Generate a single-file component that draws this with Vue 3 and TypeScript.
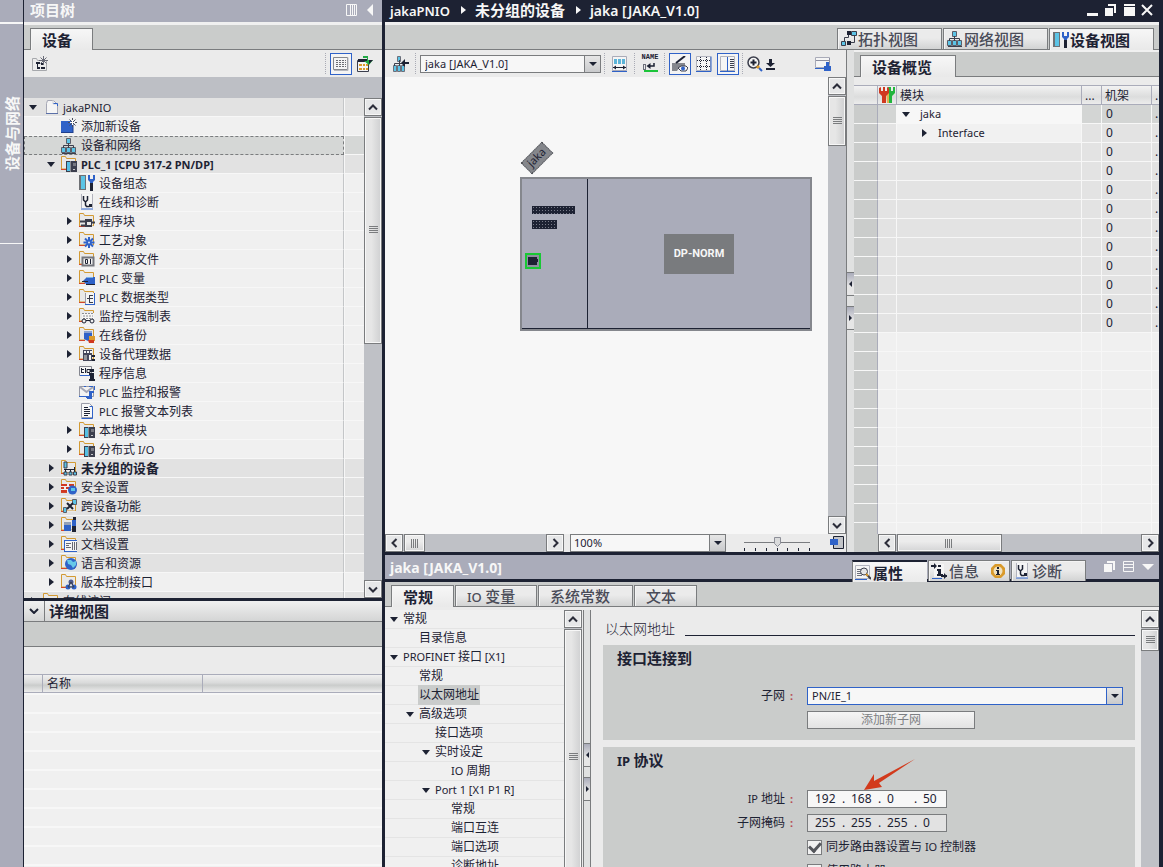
<script setup lang="ts">
import { h, ref } from 'vue'

type TreeRow = { level: number; arrow?: 'open' | 'closed'; icon: string; text: string; shade?: boolean; bold?: boolean; selected?: boolean }
type NavRow = { level: number; open?: boolean; text: string; selected?: boolean }

/* Splits a label into Latin and CJK runs so each gets its own text size. */
const Tx = (p: { t: string }) =>
  h('span', { class: 'tx' }, p.t.split(/([\x20-\x7e]+)/).filter(Boolean).map((s) =>
    /^[\x20-\x7e]/.test(s) ? h('span', { class: 'lt' }, s) : s))

const chevrons: Record<string, string> = {
  up: 'M4 10.5 8 6.5l4 4', down: 'M4 6.5l4 4 4-4', left: 'M10.5 4l-4 4 4 4', right: 'M6.5 4l4 4-4 4',
}
const chevron = (d: string) =>
  h('svg', { viewBox: '0 0 16 16', width: 16, height: 16, 'aria-hidden': 'true' },
    [h('path', { d: chevrons[d], fill: 'none', stroke: '#2b2d3a', 'stroke-width': 2 })])

/* endless: the bar runs on past the bottom of its panel, without an end button. */
const ScrollBar = (p: { dir: string; thumb: string; endless?: boolean }) => {
  const v = p.dir === 'v'
  return h('div', { class: ['sb', v ? 'sb-v' : 'sb-h'] }, [
    h('button', { class: 'sb-btn', type: 'button', 'aria-label': v ? '向上滚动' : '向左滚动' }, [chevron(v ? 'up' : 'left')]),
    h('div', { class: 'sb-track' }, [
      h('div', { class: 'sb-thumb', style: { flexBasis: p.thumb } }, [h('i', { class: 'grip' })]),
    ]),
    p.endless ? null : h('button', { class: 'sb-btn', type: 'button', 'aria-label': v ? '向下滚动' : '向右滚动' }, [chevron(v ? 'down' : 'right')]),
  ])
}
ScrollBar.props = { dir: String, thumb: String, endless: Boolean }

const folder = '<path d="M.5 13V.5h4l1 2h9V13z" fill="#e9e9e9" stroke="#d39a33"/><path d="M0 13.5h6" stroke="#d4452a"/><path d="M6 13.5h9" stroke="#e9e9e9"/>'
const plc = '<path d="M5 5h11v11H5z" fill="#3c3f4e"/><path d="M6 6h3v9H6z" fill="#55bfe3"/><path d="M9 5h1v11H9z" fill="#8a8c92"/><path d="M12 7h3v3h-3z" fill="#777982"/><path d="M12 13h2v1h-2z" fill="#c8c9cc"/>'
const wrench = '<path d="M9 0v5l2 2v8h3V7l2-2V0h-2v4h-3V0z" fill="#2f62c8"/><path d="M11 8h3v8h-3z" fill="#1d2233"/>'
const steth = '<path d="M2 0h12v15H2z" fill="#f5f5f5"/><path d="M2.5 0v14M13.5 0v14" stroke="#b2b3bd"/><path d="M2 15h12" stroke="#2f62c8"/><path d="M4.500 2v4l2 2 2-2V2M6.500 8v3l1 1.500h3" fill="none" stroke="#1d2233" stroke-width="1.500"/><path d="M10 10h3v3h-3z" fill="#1d2233"/>'
const sheet = '<path d="M2.500 .5h8l3 3v11h-11z" fill="#f7f7f7" stroke="#9a9ca8"/><path d="M10.500 3.500h3v12h-11" fill="none" stroke="#2f62c8"/>'
const net = '<path d="M5.500 .5h4v5h-4zM.5 9.500h4v5h-4zM5.500 9.500h4v5h-4zM10.500 9.500h4v5h-4z" fill="#5cc4e6" stroke="#5b5e69"/><path d="M7.500 5v5M2.500 10V7.500h10V10" fill="none" stroke="#3b3e4c"/><path d="M1 15.500h14" stroke="#3b3e4c"/>'
const icons: Record<string, string> = {
  project: '<path d="M4.500 1.500h6l4 4v9h-11v-10z" fill="#f5f5f5" stroke="#a5a7b5"/><path d="M10 1v4h4" fill="none" stroke="#d0d0d4"/><path d="M14.500 7V4.500h-4" fill="none" stroke="#2f62c8"/><path d="M3 14.500h12" stroke="#5b70a8"/>',
  add: '<path d="M0 3h12v12H0z" fill="#2f62c8"/><path d="M12 6v9M0 14.500h12" stroke="#1f3f8c"/><path d="M11.500 0v9M7 4.500h9M8.500 1.500l6 6M14.500 1.500l-6 6" stroke="#4a4c5a"/><path d="M11.500 2v5M9 4.500h5" stroke="#fff"/>',
  net,
  plc: folder + plc,
  config: '<path d="M0 0h7v15H0z" fill="#6f7175"/><path d="M2 1h4v13H2z" fill="#5cc4e6"/>' + wrench,
  steth,
  blocks: folder + '<path d="M1 8.500h6M12 9.500h4M2 12.500h5" stroke="#3b3e4c" stroke-width="2"/><path d="M6 6h7v8H6z" fill="#3b3e4c"/><path d="M8 9h4v3H8z" fill="#e8e8e8"/>',
  tech: folder + '<path d="M10 5v11M4.500 10.500h11M6 6.500l8 8M14 6.500l-8 8" stroke="#2f62c8" stroke-width="2"/><circle cx="10" cy="10.500" r="1" fill="#dfe6f5"/>',
  source: folder + '<path d="M3.500 6.500h11v8h-11z" fill="#f0f0f0" stroke="#74767d" stroke-width="2"/><path d="M6.500 8.500h2v4h-2zM11.500 8v5" fill="none" stroke="#1d2233"/>',
  tags: folder + '<path d="M4 11l4-4h8v7H7z" fill="#2f62c8"/><path d="M8 7.500h6" stroke="#78b4e8"/><path d="M3 11.500h6M7 14.500h9" stroke="#1d2233"/>',
  types: folder + '<path d="M6 4h9v11H6z" fill="#f5f5f5"/><path d="M6.500 4v11" stroke="#9a9ca8"/><path d="M15.500 4v11M6 15.500h10" stroke="#2f62c8"/><path d="M8 9.500h2M10.500 6v8M11 6.500h3M11 9.500h3M11 13.500h3" stroke="#3b3e4c"/>',
  watch: folder + '<path d="M3 5h12v8H3z" fill="#f5f5f5"/><path d="M3 5.500h12M4 8h10M4 10.500h10" stroke="#8c8e95" stroke-dasharray="2 1"/><circle cx="5" cy="13" r="2" fill="#eee" stroke="#1d2233"/><circle cx="13" cy="13" r="2" fill="#eee" stroke="#1d2233"/><path d="M7 12.500h4" stroke="#1d2233"/>',
  backup: folder + '<path d="M5 4h8v8l-4 2-4-2z" fill="#2f62c8"/><path d="M5 4h8v2H5z" fill="#8ea4cf"/><path d="M10 9h6v5h-6z" fill="#db9a2c"/><path d="M9 13h6v3h-5z" fill="#d03820"/>',
  proxy: folder + '<path d="M4 4h9v11H4z" fill="#45475a"/><path d="M5 5h2v2H5zM8 5h2v2H8zM11 5h2v2h-2zM10 9h2v5h-2z" fill="#f5f5f5"/><path d="M5 9h3v5H5z" fill="#94969c"/><path d="M13 9h3v2h-3zM13 13h3v2h-3z" fill="#1d2233"/>',
  info: '<path d="M.5 1.500h12v9H.5z" fill="#f5f5f5" stroke="#84868f"/><path d="M2.500 3v5M2 4.500h3M2 7.500h3M6.500 3v5M8 4.500h3v3H8z" fill="none" stroke="#1d2233"/><path d="M1 10.500h11" stroke="#2f62c8"/><path d="M11 4h4v3h-4zM10 8h5v6h1v2h-6v-2h1v-4h-1z" fill="#1d2233"/>',
  alarm: '<path d="M.5 2.500h14v10H.5z" fill="#f3f3f3" stroke="#9698a5"/><path d="M1 3l6.500 5L14 3" fill="none" stroke="#a5a7b5" stroke-width="2"/><path d="M0 12.500h9M15.500 2v4M5 2.500h2M10 2.500h4" stroke="#2f62c8"/><path d="M15 8h-4v5H7M12 8v6H8" fill="none" stroke="#2f62c8" stroke-width="2"/>',
  textlist: sheet + '<path d="M5 4.500h4M5 6.500h6M5 8.500h6M5 10.500h6M5 12.500h4" stroke="#1d2233"/>',
  unassigned: folder + '<path d="M3 2h3v6H3z" fill="#5cc4e6" stroke="#3b3e4c"/><path d="M3 9.500h11M4.500 10v3M9.500 10v3M13.500 7v6" stroke="#1d2233"/><path d="M3 12h3v3H3zM8 12h3v3H8zM12.500 12h3v3h-3z" fill="#5cc4e6" stroke="#3b3e4c"/>',
  security: folder + '<path d="M0 5h13v8H0z" fill="#f0f0f0"/><path d="M0 6h6M8 6h5M0 9h3M5 9h5M0 12h6" stroke="#d03820" stroke-width="2"/><circle cx="11.500" cy="11" r="4.500" fill="#2f62c8"/><path d="M10 9h4v3h-4z" fill="#5cc4e6"/>',
  cross: folder + '<path d="M11.500 1.500h4v5h-4zM2.500 9.500h3v5h-3z" fill="#5cc4e6" stroke="#5e6069"/><path d="M6 5l6 6M12 5l-6 6" stroke="#1d2233" stroke-width="2"/>',
  common: folder + '<path d="M3 5h7v9H3z" fill="#2f62c8"/><path d="M3 5h7v3H3z" fill="#93a0b8"/><path d="M11 3h4v6h-4z" fill="#2f62c8"/><path d="M12 0h3v3h-3zM11 9h4v6h-4z" fill="#1d2233"/>',
  docs: folder + '<path d="M3 4h13v11H3z" fill="#f5f5f5"/><path d="M3 4.500h13M3.500 4v11M3 15.500h13" stroke="#2f62c8"/><path d="M5 7.500h5M5 9.500h3M5 11.500h5M11.500 6v8M13.500 6v8M15.500 6v8" stroke="#666873"/>',
  lang: folder + '<circle cx="10" cy="9" r="6" fill="#2f62c8"/><path d="M6 5h4l2 2 3-1v4l-3 3-2-3-3-1z" fill="#67c8e8"/>',
  version: folder + '<circle cx="10" cy="8" r="2.500" fill="#4b5a8e"/><circle cx="7" cy="13" r="2.500" fill="#2f62c8"/><circle cx="13" cy="13" r="2.500" fill="#2f62c8"/><path d="M10 8l-3 5h6z" fill="none" stroke="#3b3e4c"/>',
  folder,
  newgroup: '<path d="M.5 14.500v-12h4l1 2h9v10z" fill="#ececec" stroke="#a6a8ac"/><path d="M4 7h4M5 12h3M9 12h4M9 8h3" stroke="#1d2233" stroke-width="2"/><path d="M5.500 7v5" stroke="#1d2233"/><path d="M11.500 0v9M7 4.500h9M8.500 1.500l6 6M14.500 1.500l-6 6" stroke="#6a6c78"/>',
  listview: '<path d="M.5 1.500h14v12H.5z" fill="#f5f5f5" stroke="#85878c"/><path d="M3 4.500h10M3 6.500h10M3 8.500h10M3 10.500h10" stroke="#6c6e74" stroke-dasharray="2 1"/><path d="M1 14.500h14v-13" fill="none" stroke="#b5b7be"/>',
  export: '<path d="M.5 4.500h11v11H.5z" fill="#f5f5f5" stroke="#3b3e4c"/><path d="M1 4.500h10" stroke="#1d2233" stroke-width="3"/><path d="M2 8h3v2H2zM6 8h2v2H6zM9 8h2v2H9zM2 12h3v2H2zM6 12h2v2H6zM9 12h2v2H9z" fill="#db9a2c"/><path d="M6 0h5v4h5l-4 5-5-4h3V2H6z" fill="#22a845"/><path d="M12 4h4l-4 4z" fill="#1d2233"/>',
  goto: '<path d="M4.500 .5h3v5h-3zM.5 9.500h3v6h-3zM4.500 9.500h3v6h-3zM8.500 9.500h3v6h-3z" fill="#5cc4e6" stroke="#6c6f7a"/><path d="M6.500 4v6M1.500 10V7.500h9V10" fill="none" stroke="#3b3e4c"/><path d="M8 7l4-4v3h4v2h-4v3z" fill="#1d2233"/>',
  width: '<path d="M.5 .5h14v14H.5z" fill="#f5f5f5" stroke="#a9abb8"/><path d="M2 3h3v5H2zM6 3h3v5H6zM10 3h3v5h-3z" fill="#5cb4d8"/><path d="M1 11.500h13" stroke="#1d2233"/><path d="M1 11.500l3-2v4zM14 11.500l-3-2v4z" fill="#1d2233"/><path d="M0 15.500h15" stroke="#2f62c8"/>',
  name: '<path d="M1.500 8v6M1 8.500h3M3.500 8v6M1 13.500h3" stroke="#6c6f7a"/><path d="M6 10h6V7" fill="none" stroke="#1d2233" stroke-width="1.500"/><path d="M4.500 10l4-3v6z" fill="#1d2233"/><path d="M2 15h14" stroke="#1cc43a" stroke-width="2"/>',
  paint: '<path d="M0 7h13v5H7l-2 3H0z" fill="#85878d"/><path d="M4 7l9-7" stroke="#1d2233" stroke-width="2"/><path d="M6 12l3-2h5l2 2-2 3H9z" fill="#f5f5f5" stroke="#3b3e4c"/><circle cx="11" cy="12.500" r="2" fill="#2f62c8"/>',
  grid: '<path d="M.5 .5h14v14H.5z" fill="#f5f5f5" stroke="#b2b4be"/><path d="M4.500 1v13M10.500 1v13M1 4.500h13M1 10.500h13" stroke="#1d2233" stroke-dasharray="1 1"/><path d="M0 15.500h15v-15" fill="none" stroke="#2f62c8"/>',
  split: '<path d="M.5 .5h14v14H.5z" fill="#f5f5f5" stroke="#b2b4be"/><path d="M7.500 1v14" stroke="#2f62c8"/><path d="M10 3.500h4M10 5.500h4M10 7.500h4M10 9.500h4M10 11.500h4" stroke="#3b3e4c"/><path d="M0 15.500h15" stroke="#2f62c8"/>',
  zoom: '<circle cx="6.500" cy="6.500" r="5.500" fill="#f5f5f5" stroke="#3b3e4c" stroke-width="1.500"/><path d="M3.500 6.500h6M6.500 3.500v6" stroke="#1d2233" stroke-width="2"/><path d="M10 10l2 2" stroke="#db9a2c" stroke-width="3"/><path d="M12 12l3 3" stroke="#2f62c8" stroke-width="2"/>',
  fit: '<path d="M6 3h3v4h3l-4.500 4L3 7h3zM3 12h9v2H3z" fill="#1d2233"/>',
  savewin: '<path d="M.5 1.500h14v10H.5z" fill="#f5f5f5" stroke="#a9abb8"/><path d="M1 4.500h13M14.500 2v6" stroke="#8d8fa0"/><path d="M0 12.500h9" stroke="#2f62c8"/><path d="M11 6h3v4h2v5H9v-5h2z" fill="#2f62c8"/>',
  topo: '<path d="M6 0h4v4H6zM6 10h4v4H6z" fill="#1d2233"/><path d="M10.500 .5h5v4h-5zM.5 10.500h4v4h-4z" fill="#5cc4e6" stroke="#3b3e4c"/><path d="M3.500 10V6.500h4V4M13.500 5v6.500H10" fill="none" stroke="#3b3e4c"/>',
  wrenches: '<path d="M9 0h3v4h2V0h2v6l-3 3v7h-3V8z" fill="#22b53e"/><path d="M7 4h3v12H8z" fill="#e0b050"/><path d="M0 1v5l3 3v7h4V9l3-3V1L8 0v4H6V0H4v4H2V0z" fill="#d03820"/>',
  props: '<path d="M.5 .5h14v13H.5z" fill="#f5f5f5" stroke="#b2b4be"/><path d="M2 4.500h4M2 6.500h3M2 8.500h4M2 10.500h5" stroke="#6c6f7a"/><circle cx="9" cy="6.500" r="3.500" fill="#e6e6e6" stroke="#3b3e4c"/><path d="M11 9l5 5" stroke="#3b3e4c" stroke-width="2"/><path d="M11 9l2 2" stroke="#db9a2c" stroke-width="2"/><path d="M0 14.500h12" stroke="#2f62c8"/>',
  infotab: '<path d="M3 1h10v13H3z" fill="#f5f5f5"/><path d="M0 3h5M10 13h6" stroke="#1d2233" stroke-width="2"/><path d="M3 0l3 3-3 3zM13 10l3 3-3 3zM7 2h3v2H7zM6 6h4v5h2v2H6v-2h1V8H6z" fill="#1d2233"/><path d="M1 15.500h10" stroke="#2f62c8"/>',
  badge: '<path d="M4 0h6l4 4v6l-4 4H4l-4-4V4z" fill="#d99a2b"/><circle cx="7" cy="7" r="4.500" fill="#f0e2c0"/><path d="M6 3h2v2H6zM5 6h3v4h1v1H5v-1h1V7H5z" fill="#1d2233"/>',
}

const tree: TreeRow[] = [
  { level: 0, arrow: 'open', icon: 'project', text: 'jakaPNIO', shade: true },
  { level: 1, icon: 'add', text: '添加新设备' },
  { level: 1, icon: 'net', text: '设备和网络', selected: true },
  { level: 1, arrow: 'open', icon: 'plc', text: 'PLC_1 [CPU 317-2 PN/DP]', shade: true, bold: true },
  { level: 2, icon: 'config', text: '设备组态' },
  { level: 2, icon: 'steth', text: '在线和诊断' },
  { level: 2, arrow: 'closed', icon: 'blocks', text: '程序块' },
  { level: 2, arrow: 'closed', icon: 'tech', text: '工艺对象' },
  { level: 2, arrow: 'closed', icon: 'source', text: '外部源文件' },
  { level: 2, arrow: 'closed', icon: 'tags', text: 'PLC 变量' },
  { level: 2, arrow: 'closed', icon: 'types', text: 'PLC 数据类型' },
  { level: 2, arrow: 'closed', icon: 'watch', text: '监控与强制表' },
  { level: 2, arrow: 'closed', icon: 'backup', text: '在线备份' },
  { level: 2, arrow: 'closed', icon: 'proxy', text: '设备代理数据' },
  { level: 2, icon: 'info', text: '程序信息' },
  { level: 2, icon: 'alarm', text: 'PLC 监控和报警' },
  { level: 2, icon: 'textlist', text: 'PLC 报警文本列表' },
  { level: 2, arrow: 'closed', icon: 'plc', text: '本地模块' },
  { level: 2, arrow: 'closed', icon: 'plc', text: '分布式 I/O' },
  { level: 1, arrow: 'closed', icon: 'unassigned', text: '未分组的设备', shade: true, bold: true },
  { level: 1, arrow: 'closed', icon: 'security', text: '安全设置', shade: true },
  { level: 1, arrow: 'closed', icon: 'cross', text: '跨设备功能', shade: true },
  { level: 1, arrow: 'closed', icon: 'common', text: '公共数据', shade: true },
  { level: 1, arrow: 'closed', icon: 'docs', text: '文档设置', shade: true },
  { level: 1, arrow: 'closed', icon: 'lang', text: '语言和资源', shade: true },
  { level: 1, arrow: 'closed', icon: 'version', text: '版本控制接口' },
  { level: 0, arrow: 'closed', icon: 'folder', text: '在线访问', shade: true },
]

const nav: NavRow[] = [
  { level: 0, open: true, text: '常规' },
  { level: 1, text: '目录信息' },
  { level: 0, open: true, text: 'PROFINET 接口 [X1]' },
  { level: 1, text: '常规' },
  { level: 1, text: '以太网地址', selected: true },
  { level: 1, open: true, text: '高级选项' },
  { level: 2, text: '接口选项' },
  { level: 2, open: true, text: '实时设定' },
  { level: 3, text: 'IO 周期' },
  { level: 2, open: true, text: 'Port 1 [X1 P1 R]' },
  { level: 3, text: '常规' },
  { level: 3, text: '端口互连' },
  { level: 3, text: '端口选项' },
  { level: 3, text: '诊断地址' },
]

const moduleRows = Array.from({ length: 24 }, (_, i) => ({
  name: i === 0 ? 'jaka' : i === 1 ? 'Interface' : '',
  rack: i < 12 ? '0' : '',
}))

const device = ref('jaka [JAKA_V1.0]')
const zoomLevel = ref('100%')
const subnet = ref('PN/IE_1')
const ip = ref(['192', '168', '0', '50'])
const mask = ref(['255', '255', '255', '0'])
const syncRouter = ref(true)
const useRouter = ref(false)
</script>

<template>
  <div class="app">
    <aside class="rail">
      <div class="rail-top"></div>
      <button class="rail-tab" type="button"><span>设备与网络</span></button>
    </aside>

    <section class="left">
      <header class="bar">
        <h2 class="big"><Tx t="项目树" /></h2>
        <span class="grow"></span>
        <svg class="columns" viewBox="0 0 12 12" width="12" height="12"><path d="M.5 .5h10v11H.5zM4.500 0v12M6.500 0v12M8.500 0v12" fill="none" stroke="#f7f7f7" /></svg>
        <svg class="collapse" viewBox="0 0 6 12" width="6" height="12"><path d="M6 0v12L0 6z" fill="#f7f7f7" /></svg>
      </header>
      <div class="tabs left-tabs"><button class="tab on" type="button"><Tx t="设备" /></button></div>
      <div class="tools left-tools">
        <button class="tool" type="button" aria-label="新建组"><svg class="ico" viewBox="0 0 16 16" v-html="icons.newgroup" /></button>
        <span class="grow"></span>
        <i class="sep"></i>
        <button class="tool active" type="button" aria-label="列表视图"><svg class="ico" viewBox="0 0 16 16" v-html="icons.listview" /></button>
        <button class="tool" type="button" aria-label="导出"><svg class="ico" viewBox="0 0 16 16" v-html="icons.export" /></button>
      </div>
      <div class="band"></div>
      <div class="tree-wrap">
        <ul class="tree">
          <li v-for="(r, i) in tree" :key="i" :class="['lv' + r.level, { shade: r.shade, bold: r.bold, selected: r.selected }]">
            <div class="tree-main">
              <span class="arrow" :class="r.arrow"></span>
              <svg class="ico" viewBox="0 0 16 16" v-html="icons[r.icon]" />
              <Tx :t="r.text" />
            </div>
            <div class="tree-side"></div>
          </li>
        </ul>
        <ScrollBar dir="v" thumb="49%" />
      </div>
      <div class="detail">
        <header class="detail-head">
          <button type="button" aria-label="折叠"><svg viewBox="0 0 10 6" width="10" height="6"><path d="M1 1l4 4 4-4" fill="none" stroke="#1d2233" stroke-width="2" /></svg></button>
          <h2 class="big strong"><Tx t="详细视图" /></h2>
        </header>
        <div class="detail-grey"></div>
        <div class="detail-tools"></div>
        <div class="detail-cols"><span></span><span>名称</span><span></span></div>
        <div class="detail-rows"></div>
      </div>
    </section>

    <main class="right">
      <section class="editor">
        <header class="title">
          <nav class="crumbs big"><Tx t="jakaPNIO" /><i></i><Tx t="未分组的设备" /><i></i><Tx t="jaka [JAKA_V1.0]" class="device-name" /></nav>
          <span class="grow"></span>
          <svg viewBox="0 0 66 13" width="66" height="13" class="win" fill="#f7f7f7">
            <path d="M0 9h11v3H0zM21 0h8v9h-2V2h-6zM18 4h8v8h-8zM37 0h11v2H37zM37 3h11v9H37z" />
            <path d="M55 1l10 10M65 1L55 11" stroke="#f7f7f7" stroke-width="2" />
          </svg>
        </header>
        <div class="tabs view-tabs">
          <button class="tab" type="button"><svg class="ico" viewBox="0 0 16 16" v-html="icons.topo" /><Tx t="拓扑视图" /></button>
          <button class="tab" type="button"><svg class="ico" viewBox="0 0 16 16" v-html="icons.net" /><Tx t="网络视图" /></button>
          <button class="tab on" type="button"><svg class="ico" viewBox="0 0 16 16" v-html="icons.config" /><Tx t="设备视图" /></button>
        </div>
        <div class="editor-body">
          <div class="device-view">
            <div class="tools">
              <button class="tool" type="button" aria-label="转到网络"><svg class="ico" viewBox="0 0 16 16" v-html="icons.goto" /></button>
              <i class="sep"></i>
              <div class="combo device-combo">
                <select v-model="device" aria-label="设备"><option>jaka [JAKA_V1.0]</option></select>
                <span class="combo-arrow"><i></i></span>
              </div>
              <i class="sep"></i>
              <button class="tool" type="button" aria-label="宽度"><svg class="ico" viewBox="0 0 16 16" v-html="icons.width" /></button>
              <i class="sep"></i>
              <button class="tool name-tool" type="button" aria-label="显示名称"><b>NAME</b><svg class="ico" viewBox="0 0 16 16" v-html="icons.name" /></button>
              <i class="sep"></i>
              <button class="tool active" type="button" aria-label="显示标签"><svg class="ico" viewBox="0 0 16 16" v-html="icons.paint" /></button>
              <button class="tool" type="button" aria-label="网格"><svg class="ico" viewBox="0 0 16 16" v-html="icons.grid" /></button>
              <button class="tool active" type="button" aria-label="拆分"><svg class="ico" viewBox="0 0 16 16" v-html="icons.split" /></button>
              <i class="sep"></i>
              <button class="tool zoom-tool" type="button" aria-label="缩放"><svg class="ico" viewBox="0 0 16 16" v-html="icons.zoom" /><svg class="ico" viewBox="0 0 16 16" v-html="icons.fit" /></button>
              <span class="grow"></span>
              <button class="tool last" type="button" aria-label="保存窗口设置"><svg class="ico" viewBox="0 0 16 16" v-html="icons.savewin" /></button>
            </div>
            <div class="canvas-row">
              <div class="canvas">
                <div class="device-label"><span>jaka</span></div>
                <div class="device">
                  <div class="slot">
                    <i class="plate long"></i>
                    <i class="plate"></i>
                    <i class="port"></i>
                  </div>
                  <div class="module"><span class="norm">DP-NORM</span></div>
                </div>
              </div>
              <ScrollBar dir="v" thumb="12%" />
            </div>
            <div class="canvas-foot">
              <ScrollBar dir="h" thumb="15%" class="foot-scroll" />
              <div class="combo zoom-combo">
                <select v-model="zoomLevel" aria-label="缩放比例"><option>100%</option></select>
                <span class="combo-arrow"><i></i></span>
              </div>
              <svg class="slider" viewBox="0 0 68 18" width="68" height="18"><path d="M0 8.500h66" stroke="#7a7c80" /><path d="M.5 14v3M11.500 14v3M22.500 14v3M33.500 14v3M43.500 14v3M54.500 14v3M65.500 14v3" stroke="#1d2233" /><path d="M30.500 3.500h6v6l-3 3-3-3z" fill="#d9dadb" stroke="#8d8f98" /></svg>
              <svg class="overview-btn" viewBox="0 0 16 16" width="16" height="16"><path d="M4.500 1.500h10v12h-10z" fill="#c2c4c8" stroke="#1d2233" /><path d="M1 4h8v6H1z" fill="#2f62c8" /></svg>
            </div>
          </div>
          <div class="splitter"><button type="button" aria-label="向左"><i class="l"></i></button><button type="button" aria-label="向右"><i class="r"></i></button></div>
          <div class="overview">
            <div class="tabs overview-tabs"><button class="tab on" type="button"><Tx t="设备概览" /></button></div>
            <div class="overview-gap"></div>
            <div class="table-wrap">
              <table>
                <colgroup><col class="c-gutter" /><col class="c-icon" /><col /><col class="c-dots" /><col class="c-rack" /><col class="c-end" /></colgroup>
                <thead>
                  <tr>
                    <th></th>
                    <th><svg class="ico" viewBox="0 0 16 16" v-html="icons.wrenches" /></th>
                    <th>模块</th><th>...</th><th>机架</th><th>.</th>
                  </tr>
                </thead>
                <tbody>
                  <tr v-for="(m, i) in moduleRows" :key="i" :class="{ used: m.rack, first: i === 0, second: i === 1 }">
                    <td class="gutter"></td><td></td>
                    <td class="name"><span v-if="m.name" class="arrow" :class="i === 0 ? 'open' : 'closed'"></span>{{ m.name }}</td>
                    <td></td><td class="rack">{{ m.rack }}</td><td>{{ m.rack ? '.' : '' }}</td>
                  </tr>
                </tbody>
              </table>
            </div>
            <div class="overview-foot"><ScrollBar dir="h" thumb="43%" /></div>
          </div>
        </div>
      </section>

      <section class="inspector">
        <header class="bar inspector-bar">
          <h2 class="big strong"><Tx t="jaka [JAKA_V1.0]" class="device-name" /></h2>
          <span class="grow"></span>
          <button class="tab on" type="button"><svg class="ico" viewBox="0 0 16 16" v-html="icons.props" /><Tx t="属性" /></button>
          <button class="tab info" type="button"><svg class="ico" viewBox="0 0 16 16" v-html="icons.infotab" /><Tx t="信息" /><svg class="badge" viewBox="0 0 14 14" v-html="icons.badge" /></button>
          <button class="tab diag" type="button"><svg class="ico" viewBox="0 0 16 16" v-html="icons.steth" /><Tx t="诊断" /></button>
          <svg class="bar-win" viewBox="0 0 50 12" width="50" height="12" fill="#f7f7f7"><path d="M3 0h8v9H9V2H3zM0 3h8v8H0zM38 3h12l-6 6z" /><path d="M19.500 .5h10v10h-10zM19 3.500h11M19 6.500h11" fill="none" stroke="#f7f7f7" /></svg>
        </header>
        <div class="tabs prop-tabs">
          <button class="tab narrow on" type="button"><Tx t="常规" /></button>
          <button class="tab medium" type="button"><Tx t="IO 变量" /></button>
          <button class="tab wide" type="button"><Tx t="系统常数" /></button>
          <button class="tab narrow" type="button"><Tx t="文本" /></button>
        </div>
        <div class="prop-body">
          <ul class="nav">
            <li v-for="(n, i) in nav" :key="i" :class="['nv' + n.level, { selected: n.selected }]">
              <span class="arrow" :class="{ open: n.open }"></span><Tx :t="n.text" />
            </li>
          </ul>
          <ScrollBar dir="v" thumb="256px" endless class="nav-scroll" />
          <div class="splitter prop-splitter"><button type="button" aria-label="向左"><i class="l"></i></button><button type="button" aria-label="向右"><i class="r"></i></button></div>
          <div class="form">
            <div class="form-title"><h3>以太网地址</h3><hr /></div>
            <fieldset class="card">
              <h4 class="big strong"><Tx t="接口连接到" /></h4>
              <div class="field">
                <label for="subnet"><Tx t="子网" /><b class="colon">:</b></label>
                <div class="combo subnet-combo">
                  <select id="subnet" v-model="subnet"><option>PN/IE_1</option></select>
                  <span class="combo-arrow"><i></i></span>
                </div>
              </div>
              <div class="field"><span></span><button class="add-subnet" type="button" disabled>添加新子网</button></div>
            </fieldset>
            <fieldset class="card">
              <h4 class="big strong"><Tx t="IP 协议" /></h4>
              <div class="field">
                <label for="ip0"><Tx t="IP 地址" /><b class="colon">:</b></label>
                <div class="octets">
                  <template v-for="(_, i) in ip" :key="i"><span v-if="i">.</span><input :id="'ip' + i" v-model="ip[i]" :aria-label="'IP 地址 ' + (i + 1)" /></template>
                  <svg class="pointer" viewBox="0 0 52 34" width="52" height="34"><path d="M0 32L10 16v7L51 1 15 25l3 4z" fill="#d23a1c" /></svg>
                </div>
              </div>
              <div class="field">
                <label for="mask0"><Tx t="子网掩码" /><b class="colon">:</b></label>
                <div class="octets muted">
                  <template v-for="(_, i) in mask" :key="i"><span v-if="i">.</span><input :id="'mask' + i" v-model="mask[i]" readonly :aria-label="'子网掩码 ' + (i + 1)" /></template>
                </div>
              </div>
              <div class="field"><span></span><label class="check"><input v-model="syncRouter" type="checkbox" /><Tx t="同步路由器设置与 IO 控制器" /></label></div>
              <div class="field"><span></span><label class="check"><input v-model="useRouter" type="checkbox" /><Tx t="使用路由器" /></label></div>
            </fieldset>
          </div>
          <ScrollBar dir="v" thumb="22px" endless />
        </div>
      </section>
    </main>
  </div>
</template>

<style>
html, body { overflow: hidden; }
.tx { white-space: pre; }
.lt { font-size: 11px; }
.big .lt, .tab .lt { font-size: 13px; }
.big .device-name .lt { font-size: 14px; }
.sb { display: flex; flex: none; background: #bfc1c6; overflow: hidden; }
.sb-v { flex-direction: column; width: 18px; }
.sb-h { height: 18px; }
.sb-btn, .sb-thumb { box-sizing: border-box; border: 1px solid #7a7c7e; background: #e6e7e8; box-shadow: inset 0 0 0 1px #f7f7f7; }
.sb-btn { flex: none; width: 18px; height: 18px; padding: 0; }
.sb-btn svg { display: block; }
.sb-track { flex: 1; display: flex; min-width: 0; min-height: 0; }
.sb-v .sb-track { flex-direction: column; padding-top: 1px; }
.sb-h .sb-track { padding-left: 1px; }
.sb-thumb { flex: none; display: flex; align-items: center; justify-content: center; min-width: 18px; min-height: 18px; }
.sb-v .sb-thumb { background: linear-gradient(90deg, #e6e6e6 40%, #cfd0d1); }
.sb-h .sb-thumb { background: linear-gradient(#ececec 40%, #d4d5d6); }
.grip { width: 9px; height: 8px; background: repeating-linear-gradient(#7a7c7e 0 1px, transparent 1px 2px); }
.sb-h .grip { width: 8px; height: 9px; background: repeating-linear-gradient(90deg, #7a7c7e 0 1px, transparent 1px 2px); }
</style>

<style scoped>
.app { display: flex; height: 100vh; background: #1d2233; color: #1d2233; font: 12px/18px "Noto Sans", "Noto Sans CJK SC", sans-serif; overflow: hidden; }
.app * { box-sizing: border-box; }
button, select, input { font: inherit; color: inherit; margin: 0; padding: 0; border: 0; background: none; border-radius: 0; }
h2, h3, h4, ul, fieldset { margin: 0; padding: 0; border: 0; min-width: 0; font-weight: normal; list-style: none; }
.grow { flex: 1; }
.ico { width: 16px; height: 16px; flex: none; display: block; }
.big { font-size: 15px; font-weight: 600; white-space: nowrap; }
.big.strong { font-weight: 700; }

.rail { flex: 0 0 23px; display: flex; flex-direction: column; margin-right: 1px; background: #aaacba; }
.rail-top { height: 24px; border-bottom: 2px solid #f7f7f7; }
.rail-tab { height: 220px; border-bottom: 1px solid #f7f7f7; color: #f7f7f7; font-size: 15px; font-weight: 600; display: flex; align-items: center; justify-content: center; line-height: 22px; }
.rail-tab span { writing-mode: vertical-rl; text-orientation: sideways; transform: rotate(180deg); }

.left { flex: 0 0 358px; display: flex; flex-direction: column; margin-right: 3px; min-width: 0; }
.bar { display: flex; align-items: center; flex: none; height: 22px; padding: 0 9px 2px 6px; background: #aaacba; color: #f7f7f7; }
.columns { margin-right: 9px; }
.tabs { display: flex; align-items: flex-end; flex: none; height: 28px; border-top: 3px solid #f0f0f0; border-bottom: 1px solid #7a7c7e; background: #cacccb; }
.tab { display: flex; align-items: center; height: 21px; padding: 0 11px; border: 1px solid #7a7c7e; border-bottom: 0; background: linear-gradient(#ebebeb 45%, #d2d3d3); box-shadow: inset 1px 1px #f4f4f4; color: #4a4c58; font-size: 15px; font-weight: 500; white-space: nowrap; }
.tab.on { height: 22px; margin-bottom: -1px; background: linear-gradient(#f7f7f7, #e9e9e9); color: #1d2233; font-weight: 600; }
.left-tabs .tab { width: 63px; margin-left: 6px; }
.tools { display: flex; align-items: center; flex: none; height: 27px; padding: 0 6px 0 5px; background: #ebebeb; }
.tool { display: flex; align-items: center; justify-content: center; width: 22px; height: 22px; flex: none; }
.tool.active { border: 1px solid #2f62c8; background: #f4f4f4; }
.tool + .tool { margin-left: 2px; }
.sep { flex: none; width: 1px; height: 22px; margin: 0 4px 0 3px; background: repeating-linear-gradient(#a9abb5 0 1px, transparent 1px 2px); }
.band { flex: none; height: 21px; background: #bdbfc5; }

.tree-wrap { flex: 500 1 0; min-height: 0; display: flex; overflow: hidden; }
.tree { flex: 1; overflow: hidden; background: #f0f0f0; }
.tree li { display: flex; height: 19px; line-height: 19px; }
.tree-main { flex: 1; display: flex; align-items: center; border-bottom: 1px solid #f7f7f7; border-right: 1px solid #c4c6c8; }
.tree-side { width: 20px; border-bottom: 1px solid #f7f7f7; border-left: 1px solid #f7f7f7; }
.tree .shade { background: #e2e2e2; }
.tree .bold { font-size: 13px; font-weight: 700; }
.tree .selected { background: #d5d7d6; }
.tree .selected .tree-main { border: 1px dashed #7a7c7e; }
.tree .lv1 .tree-main { padding-left: 18px; }
.tree .lv2 .tree-main { padding-left: 36px; }
.tree .selected .arrow { margin-left: -1px; }
.tree .ico { margin: 0 4px 0 1px; }
.arrow { flex: none; width: 18px; height: 18px; display: flex; align-items: center; justify-content: center; }
.arrow.open::before { content: ""; border: 4px solid transparent; border-top: 5px solid #1d2233; border-bottom: 0; }
.arrow.closed::before { content: ""; border: 4px solid transparent; border-left: 5px solid #1d2233; border-right: 0; }

.detail { flex: 266 1 0; min-height: 0; display: flex; flex-direction: column; margin-top: 3px; background: #f0f0f0; }
.detail-head { flex: none; display: flex; height: 21px; border-bottom: 1px solid #7a7c7e; background: linear-gradient(#f0f0f0, #d4d5d5); align-items: stretch; }
.detail-head button { width: 21px; border-right: 1px solid #7a7c7e; display: flex; align-items: center; justify-content: center; }
.detail-head h2 { line-height: 20px; padding-left: 4px; }
.detail-grey { flex: none; height: 25px; background: #cacccb; border-bottom: 1px solid #7a7c7e; }
.detail-tools { flex: none; height: 27px; background: #ebebeb; }
.detail-cols { flex: none; display: flex; height: 19px; border-top: 1px solid #aaacba; border-bottom: 1px solid #aaacba; background: linear-gradient(#f0f0f0, #dadbdb 45%, #cacccb 60%, #ececec); line-height: 17px; }
.detail-cols span:first-child { width: 19px; border-right: 1px solid #aaacba; }
.detail-cols span:nth-child(2) { width: 160px; padding-left: 4px; border-right: 1px solid #aaacba; }
.detail-rows { flex: 1; background: repeating-linear-gradient(#f7f7f7 0 2px, #f0f0f0 2px 19px); }

.right { flex: 1; min-width: 0; display: grid; grid-template-rows: minmax(0, 552fr) minmax(0, 312fr); row-gap: 3px; margin-right: 4px; }
.editor, .inspector { display: flex; flex-direction: column; min-height: 0; min-width: 0; }
.title { flex: none; display: flex; align-items: center; height: 22px; padding: 0 6px 2px 5px; color: #f7f7f7; }
.crumbs { display: flex; align-items: center; }
.crumbs i { margin: 0 9px 0 11px; border: 4px solid transparent; border-left: 5px solid #f7f7f7; border-right: 0; }
.view-tabs { justify-content: flex-end; gap: 1px; padding-right: 5px; }
.view-tabs .tab { width: 105px; padding: 0 3px; gap: 1px; }
.editor-body { flex: 1; display: flex; min-height: 0; background: #ebebeb; }
.device-view { flex: 1; min-width: 0; display: flex; flex-direction: column; border-right: 1px solid #7a7c7e; }
.combo { position: relative; display: flex; height: 18px; border: 1px solid #7a7c7e; background: #f7f7f7; }
.combo select { flex: 1; width: 100%; appearance: none; padding: 0 20px 0 4px; font-size: 11px; line-height: 16px; outline: 0; }
.combo-arrow { position: absolute; top: 0; right: 0; width: 16px; height: 100%; border-left: 1px solid #7a7c7e; background: linear-gradient(#e6e6e6, #c9cacc); display: flex; align-items: center; justify-content: center; pointer-events: none; }
.combo-arrow i { border: 4px solid transparent; border-top: 4px solid #1d2233; border-bottom: 0; }
.device-combo { flex: 0 1 181px; }
.name-tool { flex-direction: column; position: relative; }
.name-tool b { position: absolute; top: 0; left: 0; width: 100%; font: bold 7px/8px "Liberation Mono", monospace; text-align: center; }
.zoom-tool { width: 32px; }
.last { margin-right: 6px; }
.canvas-row { flex: 1; display: flex; min-height: 0; }
.canvas { position: relative; flex: 1; overflow: hidden; background: #f7f7f7; }
.device-label { position: absolute; left: 137px; top: 73px; width: 30px; height: 16px; transform: rotate(-45deg); border: 1px dotted #55575c; background: #85878c; font-size: 11px; line-height: 12px; text-align: center; }
.device { position: absolute; left: 135px; top: 100px; width: 292px; height: 154px; display: flex; border: 2px solid #85878d; background: #aaacba; box-shadow: inset 0 -1px #1d2233; }
.slot { width: 66px; border-right: 1px solid #1d2233; padding: 27px 0 0 3px; display: flex; flex-direction: column; }
.plate { width: 25px; height: 9px; margin: 0 0 24px 7px; background: radial-gradient(#777a88 30%, #1d2233 40%) 0 0 / 3px 3px; }
.plate.long { width: 43px; height: 8px; margin-bottom: 6px; }
.port { width: 16px; height: 16px; border: 2px solid #18c834; background: linear-gradient(#1d2233, #1d2233) 1px 2px / 9px 8px no-repeat, linear-gradient(#1d2233, #1d2233) 8px 4px / 3px 3px no-repeat, #8e90a0; }
.module { flex: 1; display: flex; align-items: center; justify-content: center; }
.norm { width: 70px; height: 40px; background: #797b7e; color: #f7f7f7; font: bold 11px/40px Roboto, "Liberation Sans", sans-serif; text-align: center; }
.canvas-foot { flex: none; display: flex; align-items: center; height: 18px; }
.foot-scroll { flex: 1; }
.zoom-combo { flex: 0 0 156px; margin: 0 18px 0 6px; }
.zoom-combo select { padding-left: 3px; }
.slider { flex: none; }
.overview-btn { flex: none; margin: 0 1px 0 17px; }

.splitter { flex: 0 0 7px; display: flex; flex-direction: column; justify-content: center; gap: 10px; background: #e0e1e1; }
.splitter button { height: 24px; flex: none; border-top: 1px solid #7a7c7e; border-bottom: 1px solid #7a7c7e; background: linear-gradient(#aaacba, #e6e6e6 60%); display: flex; align-items: center; justify-content: center; }
.splitter i { border: 3px solid transparent; }
.splitter .l { border-right-color: #1d2233; border-left: 0; }
.splitter .r { border-left-color: #1d2233; border-right: 0; }

.overview { flex: 0 0 305px; display: flex; flex-direction: column; min-height: 0; background: #f0f0f0; }
.overview-tabs { height: 27px; border-top-width: 2px; }
.overview-tabs .tab { width: 96px; margin-left: 6px; }
.overview-gap { flex: none; height: 8px; background: #ebebeb; }
.table-wrap { flex: 1; min-height: 0; overflow: hidden; }
table { width: 100%; table-layout: fixed; border-collapse: separate; border-spacing: 0; }
.c-gutter { width: 24px; } .c-icon { width: 19px; } .c-dots { width: 20px; } .c-rack { width: 50px; } .c-end { width: 7px; }
th { height: 20px; padding: 0 0 0 3px; border-top: 1px solid #aaacba; border-bottom: 1px solid #aaacba; border-right: 1px solid #aaacba; background: linear-gradient(#f2f2f2, #dcdddd 60%, #ececec); font-weight: normal; text-align: left; line-height: 17px; overflow: hidden; }
th:nth-child(2) { padding-left: 1px; }
th:last-child, td:last-child { border-right: 0; padding: 0 0 0 3px; }
td { height: 19px; padding: 0; border-bottom: 1px solid #f7f7f7; border-right: 1px solid #f7f7f7; line-height: 18px; overflow: hidden; }
.used td { background: #e3e3e3; }
.used.first td { background: #d3d5d4; }
.used.first .name { background: #f7f7f7; }
.used.second .name { background: #f1f1f1; }
tbody .gutter.gutter { background: #cacccb; border-right-color: #aaacba; }
.name { font-size: 11px; }
.name .arrow { display: inline-flex; vertical-align: top; margin-right: 5px; }
.second .name .arrow { margin-left: 18px; }
.rack { padding-left: 4px; }
.overview-foot { flex: none; padding-left: 24px; background: #cacccb; }

.inspector-bar { height: 27px; padding: 0 5px 0 5px; border-bottom: 3px solid #1d2233; }
.inspector-bar .tab { height: 21px; align-self: flex-end; margin-bottom: -2px; padding: 0 2px; gap: 2px; margin-right: 1px; }
.inspector-bar .tab.on { width: 75px; height: 24px; margin-bottom: -5px; border-top: 2px solid #1d2233; border-right: 0; font-weight: 700; }
.inspector-bar .info { width: 82px; }
.inspector-bar .tab.diag { width: 75px; margin-right: 18px; }
.badge { width: 14px; height: 14px; margin-left: 10px; }
.prop-tabs { height: 25px; border-top: 0; padding-left: 6px; gap: 1px; }
.prop-tabs .on { font-weight: 700; }
.narrow { width: 63px; }
.medium { width: 82px; }
.wide { width: 95px; }
.prop-body { flex: 1; display: flex; min-height: 0; background: #ebebeb; padding-top: 3px; }
.nav { flex: 0 0 179px; overflow: hidden; background: #f0f0f0; }
.nav li { display: flex; height: 19px; border-bottom: 1px solid #e4e4e4; line-height: 18px; }
.nv1 { padding-left: 16px; } .nv2 { padding-left: 32px; } .nv3 { padding-left: 48px; }
.nav .selected .tx { background: #cacccb; box-shadow: 0 0 0 1px #cacccb; }
.nav-scroll { margin-right: 1px; }
.prop-splitter { border-left: 1px solid #7a7c7e; border-right: 1px solid #7a7c7e; justify-content: flex-start; padding-top: 133px; flex-basis: 8px; }
.form { flex: 1; min-width: 0; overflow: hidden; padding: 9px 6px 0 12px; }
.form-title { display: flex; gap: 10px; height: 26px; }
.form-title h3 { font-size: 14px; line-height: 20px; padding-left: 2px; font-weight: 300; }
.form-title hr { flex: 1; height: 1px; margin: 16px 0 0; border: 0; background: #1d2233; }
.card { background: #cacccb; padding: 4px 12px 5px 14px; margin-bottom: 7px; }
.card h4 { line-height: 18px; margin-bottom: 20px; }
.field { display: grid; grid-template-columns: 179px minmax(0, 1fr); column-gap: 11px; height: 18px; margin-bottom: 6px; }
.field > label:first-child { text-align: right; padding-right: 3px; }
.colon { margin-left: 5px; color: #b64a52; font-size: 11px; }
.subnet-combo, .subnet-combo .combo-arrow { border-color: #2f62c8; }
.add-subnet { width: 168px; height: 18px; border: 1px solid #7a7c7e; background: linear-gradient(#f5f5f5, #e3e3e3); color: #7d7f83; line-height: 16px; }
.octets { position: relative; width: 140px; height: 18px; display: flex; padding-left: 7px; border: 1px solid #7a7c7e; background: #f7f7f7; line-height: 16px; }
.octets input { width: 27px; height: 16px; outline: 0; }
.octets span { width: 9px; }
.octets.muted { background: #e2e2e2; }
.octets input:last-of-type { width: 20px; }
.pointer { position: absolute; left: 56px; top: -33px; }
.check { display: flex; align-items: center; gap: 4px; white-space: nowrap; }
.check input { appearance: none; flex: none; width: 15px; height: 15px; border: 1px solid #7a7c7e; background: #f1f1f1; display: flex; align-items: center; justify-content: center; }
.check input:checked::before { content: ""; width: 5px; height: 9px; margin-top: -3px; border: solid #55575c; border-width: 0 3px 3px 0; transform: rotate(42deg); }
</style>
